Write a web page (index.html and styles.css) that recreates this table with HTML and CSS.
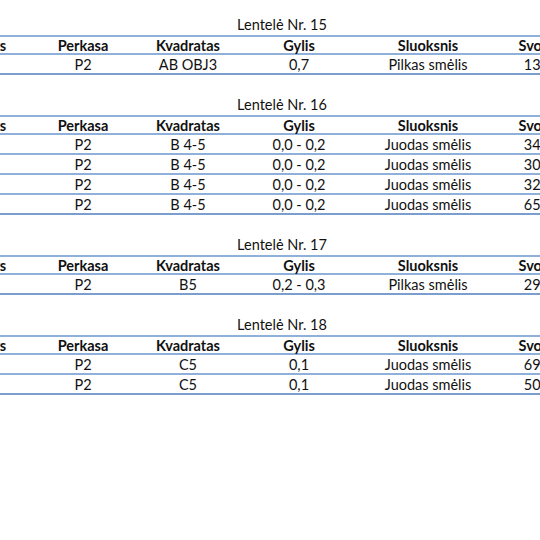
FILE: index.html
```html
<!DOCTYPE html>
<html lang="lt">
<head>
    <meta charset="UTF-8">
    <meta name="viewport" content="width=device-width, initial-scale=1.0">
    <title>Lentelės</title>
    <link rel="stylesheet" href="styles.css">
</head>
<body>
    <div class="sheet">
        <div class="block">
            <div class="title">Lentelė Nr. 15</div>
            <table class="grid">
                <colgroup>
                    <col class="c-rad"><col class="c-perk"><col class="c-kv"><col class="c-gyl"><col class="c-sl"><col class="c-sv">
                </colgroup>
                <thead>
                    <tr><th>Radinys</th><th>Perkasa</th><th>Kvadratas</th><th>Gylis</th><th>Sluoksnis</th><th>Svoris</th></tr>
                </thead>
                <tbody>
                    <tr><td>1</td><td>P2</td><td>AB OBJ3</td><td>0,7</td><td>Pilkas smėlis</td><td>13,4</td></tr>
                </tbody>
            </table>
        </div>

        <div class="block">
            <div class="title">Lentelė Nr. 16</div>
            <table class="grid">
                <colgroup>
                    <col class="c-rad"><col class="c-perk"><col class="c-kv"><col class="c-gyl"><col class="c-sl"><col class="c-sv">
                </colgroup>
                <thead>
                    <tr><th>Radinys</th><th>Perkasa</th><th>Kvadratas</th><th>Gylis</th><th>Sluoksnis</th><th>Svoris</th></tr>
                </thead>
                <tbody>
                    <tr><td>1</td><td>P2</td><td>B 4-5</td><td>0,0 - 0,2</td><td>Juodas smėlis</td><td>34,1</td></tr>
                    <tr><td>2</td><td>P2</td><td>B 4-5</td><td>0,0 - 0,2</td><td>Juodas smėlis</td><td>30,6</td></tr>
                    <tr><td>3</td><td>P2</td><td>B 4-5</td><td>0,0 - 0,2</td><td>Juodas smėlis</td><td>32,2</td></tr>
                    <tr><td>4</td><td>P2</td><td>B 4-5</td><td>0,0 - 0,2</td><td>Juodas smėlis</td><td>65,0</td></tr>
                </tbody>
            </table>
        </div>

        <div class="block">
            <div class="title">Lentelė Nr. 17</div>
            <table class="grid">
                <colgroup>
                    <col class="c-rad"><col class="c-perk"><col class="c-kv"><col class="c-gyl"><col class="c-sl"><col class="c-sv">
                </colgroup>
                <thead>
                    <tr><th>Radinys</th><th>Perkasa</th><th>Kvadratas</th><th>Gylis</th><th>Sluoksnis</th><th>Svoris</th></tr>
                </thead>
                <tbody>
                    <tr><td>1</td><td>P2</td><td>B5</td><td>0,2 - 0,3</td><td>Pilkas smėlis</td><td>29,8</td></tr>
                </tbody>
            </table>
        </div>

        <div class="block">
            <div class="title">Lentelė Nr. 18</div>
            <table class="grid">
                <colgroup>
                    <col class="c-rad"><col class="c-perk"><col class="c-kv"><col class="c-gyl"><col class="c-sl"><col class="c-sv">
                </colgroup>
                <thead>
                    <tr><th>Radinys</th><th>Perkasa</th><th>Kvadratas</th><th>Gylis</th><th>Sluoksnis</th><th>Svoris</th></tr>
                </thead>
                <tbody>
                    <tr><td>1</td><td>P2</td><td>C5</td><td>0,1</td><td>Juodas smėlis</td><td>69,3</td></tr>
                    <tr><td>2</td><td>P2</td><td>C5</td><td>0,1</td><td>Juodas smėlis</td><td>50,7</td></tr>
                </tbody>
            </table>
        </div>
    </div>
</body>
</html>
```

FILE: styles.css
```css
:root {
    --line: #8fb0d8;
    --line-dark: #7a9fcf;
    --text: #111111;
}
html, body {
    margin: 0;
    padding: 0;
    background: #ffffff;
    overflow: hidden;
}
body {
    font-family: Lato, "Liberation Sans", sans-serif;
    font-size: 14.5px;
    color: var(--text);
}
.sheet {
    padding-top: 15px;
    display: flex;
    flex-direction: column;
    gap: 20px;
}
.title {
    width: 564px;
    height: 20px;
    line-height: 20px;
    text-align: center;
}
.grid {
    margin-left: -74px;
    table-layout: fixed;
    border-collapse: separate;
    border-spacing: 0;
    width: 646px;
}
.c-rad { width: 110px; }
.c-perk { width: 94px; }
.c-kv { width: 116px; }
.c-gyl { width: 106px; }
.c-sl { width: 152px; }
.c-sv { width: 68px; }
.grid th,
.grid td {
    padding: 1px 0 0;
    text-align: center;
    white-space: nowrap;
    border-bottom: 2px solid var(--line);
}
.grid th {
    font-weight: bold;
    height: 15px;
    line-height: 15px;
    border-top: 2px solid var(--line);
}
.grid td {
    height: 17px;
    line-height: 17px;
}
.grid tbody tr:last-child td {
    border-bottom-color: var(--line-dark);
}
```
